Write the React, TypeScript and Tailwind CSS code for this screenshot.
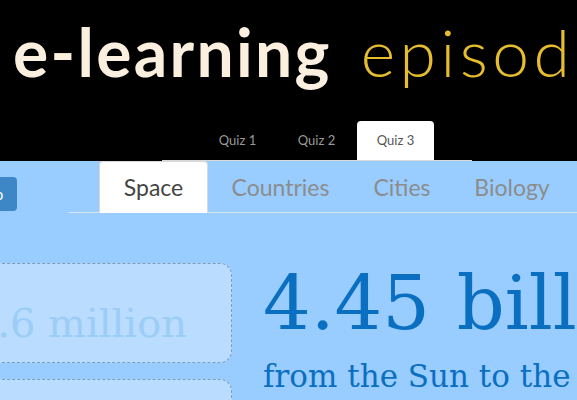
import React from 'react'

const quizTabs = ['Quiz 1', 'Quiz 2', 'Quiz 3']
const topicTabs = [
	{ label: 'Space', width: 'w-[109px]' },
	{ label: 'Countries', width: 'w-[139px]' },
	{ label: 'Cities', width: 'w-[98px]' },
	{ label: 'Biology', width: 'w-[116px]' },
]

const sans = "font-['Lato','Open_Sans',sans-serif]"
const serif = "font-['DejaVu_Serif','Liberation_Serif',serif]"

export default function App() {
	return (
		<div className="w-[577px] h-[400px] overflow-hidden bg-[#99ccff]">
			<header className="bg-black h-[161px] flex flex-col">
				<h1
					className={`${sans} whitespace-nowrap pl-[13px] pt-[12px] text-[66px] leading-[80px]`}
				>
					<span className="font-bold text-[#fbefdf] tracking-[2.3px]">e-learning</span>
					<span className="font-light text-[#e6bd2c] tracking-[4.5px] ml-[29px]">episodes</span>
				</h1>
				<nav className="mt-auto flex border-b border-[#d9d9d9] ml-[162px] w-[310px]">
					<div className="flex ml-[37px] gap-[2px]">
						{quizTabs.map((tab) => (
							<a
								key={tab}
								className={`${sans} h-[39px] w-[77px] flex items-center justify-center text-[13px] rounded-t-[4px] ${
									tab === 'Quiz 3'
										? 'bg-white text-[#555]'
										: 'text-[#9a9a9a]'
								}`}
							>
								{tab}
							</a>
						))}
					</div>
				</nav>
			</header>

			<section>
				<div className="flex items-start">
					<button
						className={`${sans} mt-[16px] -ml-[30px] h-[34px] w-[47px] bg-[#3d87c7] text-white text-[15px] rounded-[4px]`}
					>
						Go
					</button>
					<div className="ml-[52px] pl-[30px] flex-1 flex gap-[3px] border-b border-[#d6e6f5] h-[52px] -mr-[40px]">
						{topicTabs.map((tab) => (
							<a
								key={tab.label}
								className={`${sans} ${tab.width} shrink-0 h-[52px] flex items-center justify-center text-[23px] rounded-t-[4px] ${
									tab.label === 'Space'
										? 'bg-white text-[#444] border border-b-0 border-[#d8d8d8]'
										: 'text-[#8c8c8c]'
								}`}
							>
								{tab.label}
							</a>
						))}
					</div>
				</div>

				<div className="flex mt-[50px] -ml-[40px]">
					<div className="w-[272px] shrink-0 flex flex-col gap-[16px]">
						<div className="h-[100px] rounded-[12px] border border-dashed border-[#7f9bb6] bg-[#b9dcff] flex items-center justify-end pr-[44px] pt-[20px]">
							<span className={`${serif} text-[40px] text-[#9ccdf7] whitespace-nowrap`}>
								4.6 million
							</span>
						</div>
						<div className="h-[100px] rounded-[12px] border border-dashed border-[#7f9bb6] bg-[#b9dcff]" />
					</div>
					<div className="ml-[31px] flex flex-col whitespace-nowrap text-[#0b6fc1]">
						<span className={`${serif} text-[75px] leading-[80px] [word-spacing:3px]`}>
							4.45 billion km
						</span>
						<span className={`${serif} text-[31px] leading-[40px] mt-[13px]`}>
							from the Sun to the Neptune
						</span>
					</div>
				</div>
			</section>
		</div>
	)
}
